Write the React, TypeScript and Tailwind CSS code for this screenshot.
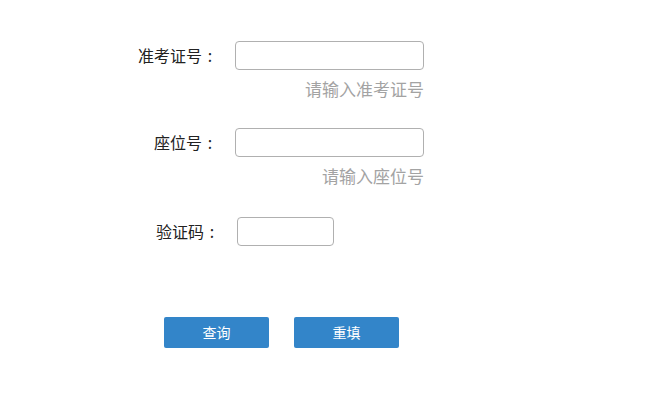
function Colon() {
  return <span className="inline-block w-[16px] text-center">:</span>
}

export default function App() {
  return (
    <div
      className="w-[645px] h-[406px] bg-white pt-[41px] text-[16px] text-[#222]"
      style={{ fontFamily: '"Microsoft YaHei", "Noto Sans CJK SC", "Noto Sans", sans-serif' }}
    >
      {/* 准考证号 */}
      <div className="flex items-center h-[29px]">
        <label className="w-[218px] text-right leading-[29px]">准考证号<Colon /></label>
        <input className="ml-[17px] w-[189px] h-[29px] border border-[#b0b0b0] rounded-[4px] outline-none px-2" />
      </div>
      <div className="w-[424px] mt-[7px] h-[24px] leading-[24px] text-right text-[17px] text-[#a3a3a3]">请输入准考证号</div>

      {/* 座位号 */}
      <div className="flex items-center h-[29px] mt-[27px]">
        <label className="w-[218px] text-right leading-[29px]">座位号<Colon /></label>
        <input className="ml-[17px] w-[189px] h-[29px] border border-[#b0b0b0] rounded-[4px] outline-none px-2" />
      </div>
      <div className="w-[424px] mt-[7px] h-[24px] leading-[24px] text-right text-[17px] text-[#a3a3a3]">请输入座位号</div>

      {/* 验证码 */}
      <div className="flex items-center h-[29px] mt-[29px]">
        <label className="w-[220px] text-right leading-[29px]">验证码<Colon /></label>
        <input className="ml-[17px] w-[97px] h-[29px] border border-[#b0b0b0] rounded-[4px] outline-none px-2" />
      </div>

      {/* Buttons */}
      <div className="flex gap-[25px] pl-[164px] mt-[71px]">
        <button className="w-[105px] h-[31px] bg-[#3385c9] rounded-[2px] text-white text-[14px]">查询</button>
        <button className="w-[105px] h-[31px] bg-[#3385c9] rounded-[2px] text-white text-[14px]">重填</button>
      </div>
    </div>
  )
}
